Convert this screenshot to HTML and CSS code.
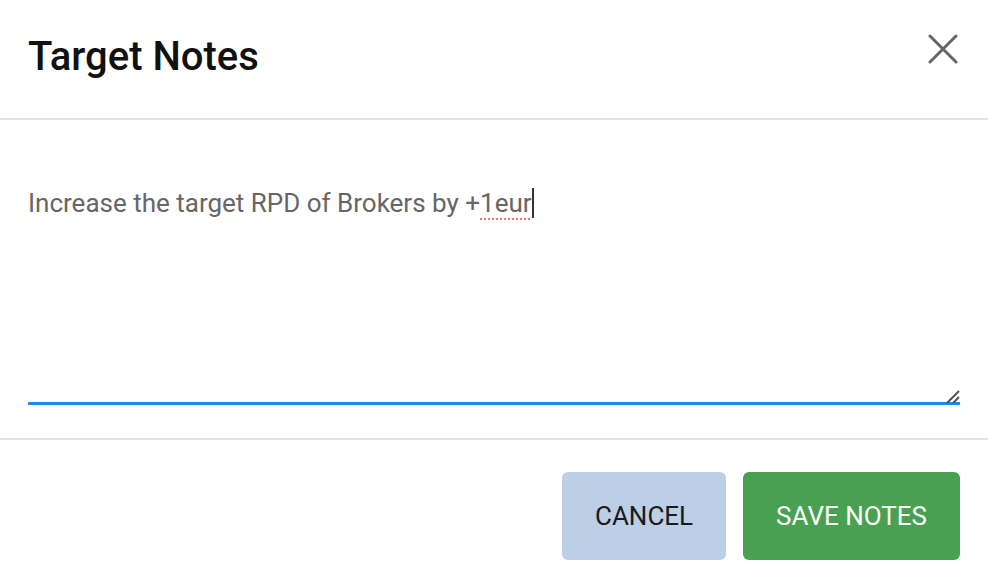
FILE: index.html
```html
<!DOCTYPE html>
<html lang="en">
<head>
    <meta charset="UTF-8">
    <meta name="viewport" content="width=device-width, initial-scale=1.0">
    <title>Target Notes</title>
    <link rel="stylesheet" href="styles.css">
</head>
<body>
    <div class="modal">
        <div class="modal-header">
            <h2 class="modal-title">Target Notes</h2>
            <button type="button" class="close-btn" aria-label="Close">
                <svg width="30" height="30" viewBox="0 0 30 30">
                    <path d="M2 2 L28 28 M28 2 L2 28" stroke="#666" stroke-width="3" stroke-linecap="round" fill="none"/>
                </svg>
            </button>
        </div>
        <div class="modal-body">
            <div class="notes-input">
                <span class="notes-text">Increase the target RPD of Brokers by +<span class="misspelled">1eur</span><span class="caret"></span></span>
                <svg class="grip" width="16" height="16" viewBox="0 0 16 16">
                    <path d="M15 3 L3 15 M15 9 L9 15" stroke="#555" stroke-width="2" fill="none"/>
                </svg>
            </div>
        </div>
        <div class="modal-footer">
            <button type="button" class="btn btn-cancel">Cancel</button>
            <button type="button" class="btn btn-save">Save Notes</button>
        </div>
    </div>
</body>
</html>
```

FILE: styles.css
```css
body {
    margin: 0;
    background-color: #ffffff;
    font-family: Roboto, "Liberation Sans", sans-serif;
}

.modal {
    width: 100%;
    height: 588px;
    display: flex;
    flex-direction: column;
}

.modal-header {
    height: 120px;
    padding: 0 30px 0 28px;
    display: flex;
    justify-content: space-between;
    align-items: center;
    border-bottom: 2px solid #dfe2e5;
    box-sizing: border-box;
}

.modal-title {
    margin: 0;
    font-size: 40px;
    font-weight: 500;
    color: #111;
    padding-bottom: 6px;
}

.close-btn {
    border: none;
    background: none;
    padding: 0;
    margin-bottom: 20px;
    cursor: pointer;
    display: flex;
}

.modal-body {
    padding: 53px 28px 33px;
}

.notes-input {
    position: relative;
    height: 232px;
    box-sizing: border-box;
    padding-top: 12px;
    border-bottom: 3px solid #1a8cf0;
    font-size: 26px;
    line-height: 36px;
    color: #666;
}

.misspelled {
    text-decoration: underline dotted #f07070;
    text-decoration-thickness: 2px;
    text-underline-offset: 6px;
}

.caret {
    display: inline-block;
    width: 2px;
    height: 30px;
    background-color: #333;
    vertical-align: -6px;
}

.grip {
    position: absolute;
    right: 0;
    bottom: -2px;
}

.modal-footer {
    border-top: 2px solid #dfe2e5;
    padding: 32px 28px 28px;
    display: flex;
    justify-content: flex-end;
    gap: 17px;
}

.btn {
    height: 88px;
    border: none;
    border-radius: 6px;
    padding: 0 33px;
    font-family: Roboto, "Liberation Sans", sans-serif;
    font-size: 26px;
    text-transform: uppercase;
    cursor: pointer;
}

.btn-cancel {
    background-color: #bccfe6;
    color: #1a1a1a;
}

.btn-save {
    background-color: #47a150;
    color: #ffffff;
}
```
